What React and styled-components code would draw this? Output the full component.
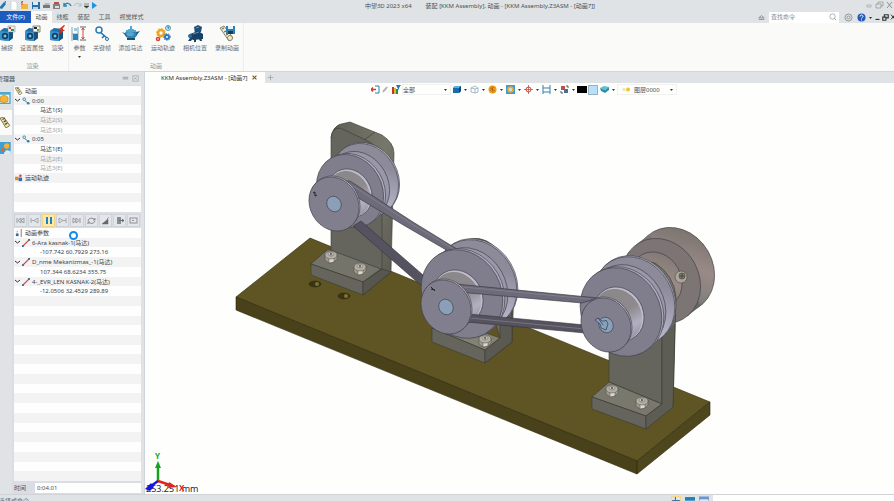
import React from 'react';
import styled, { createGlobalStyle } from 'styled-components';

const GlobalStyle = createGlobalStyle`
  * {
    box-sizing: border-box;
  }
  body {
    margin: 0;
    overflow: hidden;
    font-family: "Noto Sans", "Noto Sans CJK SC", sans-serif;
    font-size: 6px;
    line-height: 8px;
    color: #4c4f52;
  }
  button, input, select {
    margin: 0;
    padding: 0;
    border: 0;
    border-radius: 0;
    background: none;
    font: inherit;
    color: inherit;
  }
  svg {
    display: block;
    flex: none;
  }
`;

const Window = styled.div`
  display: flex;
  flex-direction: column;
  height: 100vh;
  background: #dfe3e5;
`;

const TitleBar = styled.header`
  display: flex;
  align-items: center;
  flex: 0 0 11px;
`;

const QuickAccess = styled.div`
  display: flex;
  align-items: center;
  gap: 1px;
`;

const IconButton = styled.button`
  display: flex;
  align-items: center;
  justify-content: center;
  flex: none;
  width: ${({ $w }) => $w || 10}px;
  height: 10px;
`;

const Title = styled.h1`
  display: flex;
  flex: 1;
  justify-content: center;
  gap: 14px;
  margin: 0;
  font-size: 6px;
  font-weight: 400;
  white-space: nowrap;
`;

const TabRow = styled.nav`
  display: flex;
  align-items: stretch;
  flex: 0 0 12px;
`;

const RibbonTab = styled.button`
  padding: 0 4px;
  white-space: nowrap;
  color: ${({ $file }) => ($file ? '#fff' : '#55595c')};
  background: ${({ $file, $active }) => {
    if ($file) return '#1d5cbe';
    return $active ? '#fafaf8' : 'transparent';
  }};
  width: ${({ $w }) => $w}px;
`;

const TabTools = styled.div`
  display: flex;
  align-items: center;
  margin-left: auto;
`;

const SearchBox = styled.label`
  display: flex;
  align-items: center;
  width: 70px;
  height: 11px;
  margin: 0 3px;
  padding: 0 2px;
  background: #fff;
  input {
    flex: 1;
    min-width: 0;
    outline: none;
  }
  input::placeholder {
    color: #85898c;
  }
`;

const Ribbon = styled.div`
  display: flex;
  flex: 0 0 49px;
  background: #fafaf8;
  border-bottom: 1px solid #d3d6d8;
`;

const RibbonGroup = styled.section`
  display: flex;
  flex-direction: column;
  justify-content: space-between;
  padding: 2px ${({ $end }) => $end || 0}px 0 0;
  border-right: 1px solid #eceeee;
`;

const GroupButtons = styled.div`
  display: flex;
`;

const GroupName = styled.span`
  text-align: center;
  color: #94979a;
  padding-bottom: 1px;
`;

const BigButton = styled.button`
  display: flex;
  flex-direction: column;
  align-items: center;
  justify-content: flex-start;
  gap: 2px;
  width: ${({ $w }) => $w}px;
  white-space: nowrap;
  line-height: 8px;
  color: #6a6d70;
`;

const Body = styled.main`
  display: flex;
  flex: 1;
  min-height: 0;
`;

const Side = styled.aside`
  display: flex;
  flex-direction: column;
  flex: 0 0 145px;
  border-right: 1px solid #d0d4dc;
`;

const SideHead = styled.div`
  display: flex;
  align-items: center;
  flex: 0 0 13px;
  padding: 0 4px 0 0;
  overflow: hidden;
`;

const SideTitle = styled.span`
  flex: 1;
  margin-left: -3px;
`;

const SideMain = styled.div`
  display: flex;
  flex: 1;
  min-height: 0;
`;

const SideTabs = styled.div`
  display: flex;
  flex-direction: column;
  flex: 0 0 12px;
`;

const SideTab = styled.button`
  display: flex;
  align-items: center;
  height: 25px;
  overflow: hidden;
  background: ${({ $active }) => ($active ? '#fafaf8' : 'transparent')};
`;

const SidePanel = styled.div`
  position: relative;
  display: flex;
  flex-direction: column;
  flex: 1;
  margin-right: 3px;
  padding: 1px 0 0 2px;
  background: #dadde5;
`;

const Rows = styled.ul`
  display: grid;
  grid-template-rows: repeat(${({ $count }) => $count}, 1fr);
  flex: ${({ $h }) => ($h ? `0 0 ${$h}px` : '1')};
  min-height: 0;
  margin: 0;
  padding: 0;
  list-style: none;
  background: #fefefe;
`;

const Row = styled.li`
  display: flex;
  align-items: center;
  gap: 2px;
  min-height: 0;
  padding-left: ${({ $indent }) => $indent || 1}px;
  white-space: nowrap;
  line-height: 8px;
  color: ${({ $dim }) => ($dim ? '#a6a6a6' : '#414446')};
  &:nth-child(even) {
    background: #f3f3f3;
  }
`;

const Player = styled.div`
  display: flex;
  align-items: center;
  flex: 0 0 16px;
`;

const PlayerButton = styled.button`
  display: flex;
  align-items: center;
  justify-content: center;
  flex: 1;
  height: 13px;
  margin-right: 1px;
  border: 1px solid ${({ $on }) => ($on ? '#ecd48a' : '#cfd2d8')};
  background: ${({ $on }) => ($on ? '#fbe9ae' : '#e4e6ea')};
`;

const Spinner = styled.div`
  position: absolute;
  left: 57px;
  top: 146px;
  width: 9px;
  height: 9px;
  border: 2px solid #128ce8;
  border-radius: 50%;
`;

const TimeRow = styled.label`
  display: flex;
  align-items: center;
  flex: 0 0 13px;
  input {
    flex: 1;
    min-width: 0;
    height: 10px;
    margin-left: 9px;
    padding-left: 2px;
    background: #fefefe;
  }
`;

const Work = styled.section`
  display: flex;
  flex-direction: column;
  flex: 1;
  min-width: 0;
`;

const DocTabs = styled.div`
  display: flex;
  align-items: center;
  flex: 0 0 11px;
`;

const DocTab = styled.button`
  display: flex;
  align-items: center;
  align-self: stretch;
  gap: 3px;
  padding: 0 7px 0 16px;
  background: #fefefc;
  color: #2c2e30;
`;

const Viewport = styled.div`
  position: relative;
  display: flex;
  flex-direction: column;
  flex: 1;
  min-height: 0;
  background: #fefefc;
`;

const ViewTools = styled.div`
  display: flex;
  align-items: center;
  justify-content: center;
  flex: 0 0 13px;
  padding-left: 8px;
`;

const Picker = styled.span`
  display: flex;
  align-items: center;
  width: ${({ $w }) => $w}px;
  height: 11px;
  padding-right: 2px;
  border: 1px solid #f0f0ee;
  select {
    flex: 1;
    min-width: 0;
    appearance: none;
    outline: none;
  }
`;

const Swatch = styled.button`
  width: 10px;
  height: ${({ $h }) => $h}px;
  margin-right: 1px;
  background: ${({ $color }) => $color};
  border: 1px solid ${({ $edge }) => $edge};
`;

const Scene = styled.svg`
  flex: 1;
  width: 100%;
  min-height: 0;
`;

const Measure = styled.span`
  position: absolute;
  left: 1px;
  bottom: 0;
  font-size: 9px;
  line-height: 10px;
  color: #2b2b2b;
`;

const StatusBar = styled.footer`
  display: flex;
  align-items: flex-start;
  flex: 0 0 7px;
  overflow: hidden;
  border-top: 1px solid #cfd3d5;
`;

const StatusText = styled.span`
  flex: 1;
  margin-left: -1px;
  padding-top: 2px;
  color: #6c7073;
`;

const StatusIcons = styled.div`
  display: flex;
  gap: 4px;
  padding: 1px 4px 0;
`;

const StatusField = styled.div`
  width: 181px;
  height: 7px;
  background: #fefefc;
`;

const Caret = () => (
  <svg width="5" height="5" viewBox="0 0 5 5"><path d="M1 2h3L2.500 4z" fill="#333" /></svg>
);

const SmallCaretButton = () => <IconButton $w={8} aria-label="更多"><Caret /></IconButton>;

/* ribbon drawings, 17 x 17 */
const CameraBody = ({ children }) => (
  <svg width="17" height="17" viewBox="0 0 17 17">
    <path d="M1 6l4-3 9 1v9l-4 3-9-1z" fill="#1f6fa8" />
    <path d="M1 6l9 1v9l-9-1z" fill="#3b93cc" />
    <path d="M10 7l4-3v9l-4 3z" fill="#14527f" />
    <circle cx="6" cy="11" r="3.200" fill="#0f3f63" />
    <circle cx="6" cy="11" r="1.500" fill="#7cc3ea" />
    {children}
  </svg>
);

const CaptureIcon = () => (
  <CameraBody>
    <path d="M9 1h7v6H9z" fill="#eef1ee" stroke="#777" strokeWidth="0.500" />
    <path d="M10 2h2v2h-2z" fill="#d43a2c" />
    <path d="M12 4h3v2h-3z" fill="#2f9a46" />
  </CameraBody>
);

const CaptureSetIcon = () => (
  <CameraBody>
    <path d="M9 1h7v6H9z" fill="#f5f5f5" stroke="#555" strokeWidth="0.700" />
    <path d="M10 2h3v2h-3z" fill="#222" />
    <path d="M13 4h2v2h-2z" fill="#5c9e3c" />
  </CameraBody>
);

const RenderIcon = () => (
  <CameraBody>
    <path d="M15 0l-6 5 3 .5L9 10l7-5-3-.5 3-4z" fill="#e0301f" />
  </CameraBody>
);

const ParamIcon = () => (
  <svg width="17" height="17" viewBox="0 0 17 17">
    <path d="M1 2v14M7 2v14M1 9h6" stroke="#8aa0b0" fill="none" />
    <path d="M2 9h5v6H2z" fill="#2a86b8" />
    <path d="M3 3h3v3H3z" fill="#9fcbe2" />
    <path d="M9 2h6M9 15h6" stroke="#567" />
    <path d="M12 3v11M10.500 5L12 3l1.500 2M10.500 12l1.500 2 1.500-2" stroke="#cf4a3a" fill="none" />
  </svg>
);

const KeyIcon = () => (
  <svg width="17" height="17" viewBox="0 0 17 17">
    <path d="M6 7l7 6M10 11l-2 2" stroke="#1f6fa5" strokeWidth="1.500" fill="none" />
    <circle cx="5" cy="5" r="3" fill="#fff" stroke="#2a7db4" strokeWidth="1.500" />
    <circle cx="13" cy="14" r="1.500" fill="#fff" stroke="#1f6fa5" />
  </svg>
);

const MotorIcon = () => (
  <svg width="18" height="17" viewBox="0 0 18 17">
    <ellipse cx="9" cy="9" rx="6" ry="5" fill="#2d86b5" />
    <path d="M0 7l5 2v3zM18 6l-4 1v4z" fill="#1d6590" />
    <path d="M5 13h8v2H5z" fill="#155070" />
    <path d="M4 5h10v2H4zM8 1h2v4H8z" fill="#4fa6cf" />
    <ellipse cx="8" cy="9" rx="4" ry="2" fill="#7fc4e2" opacity=".5" />
  </svg>
);

const TraceIcon = () => (
  <svg width="17" height="17" viewBox="0 0 17 17">
    <circle cx="6" cy="8" r="3" fill="none" stroke="#eca421" strokeWidth="2.500" />
    <circle cx="6" cy="8" r="4.500" fill="none" stroke="#eca421" strokeDasharray="1.500 2" />
    <circle cx="12" cy="12" r="2" fill="none" stroke="#2b78bf" strokeWidth="2" />
    <circle cx="12" cy="12" r="3.500" fill="none" stroke="#2b78bf" strokeDasharray="1 1.500" />
    <circle cx="3" cy="14" r="1.500" fill="none" stroke="#d8432f" strokeWidth="1.500" />
    <circle cx="13" cy="3" r="2.500" fill="#d5ebf2" stroke="#4d9cb4" />
    <path d="M12 2h2l-1 2" fill="none" stroke="#2e7d95" />
  </svg>
);

const CameraPosIcon = () => (
  <svg width="17" height="17" viewBox="0 0 17 17">
    <path d="M7 2l4-2 4 2-1 5-6 2z" fill="#1f4f78" />
    <path d="M3 9l8-3 5 3v5L6 15l-4-3z" fill="#164064" />
    <circle cx="3" cy="11" r="2" fill="#2c6b9c" />
    <path d="M3 13l-2 3h3l2-3zM11 12l2 4h2l-1-4zM7 13v4h2v-4z" fill="#18415f" />
    <path d="M9 3l3-1M6 9l6-2" stroke="#5b93bc" />
  </svg>
);

const RecordIcon = () => (
  <svg width="17" height="17" viewBox="0 0 17 17">
    <path d="M1 3l4-2 9 12-4 3z" fill="#f2ebcf" stroke="#8b8467" />
    <path d="M3 4l2-1M5 7l2-1M7 10l2-1" stroke="#57523c" />
    <path d="M7 1h9v8H7z" fill="#2f7fb3" />
    <path d="M9 1h5v3H9z" fill="#e8f2f7" />
    <path d="M9 6h5v3H9z" fill="#173e5b" />
    <circle cx="11" cy="13" r="2.500" fill="#f1ecd2" stroke="#8b8467" />
  </svg>
);

const renderTools = [
  { label: '捕捉', w: 14, Icon: CaptureIcon },
  { label: '设置属性', w: 36, Icon: CaptureSetIcon },
  { label: '渲染', w: 15, Icon: RenderIcon },
];

const motionTools = [
  { label: '参数', w: 21, Icon: ParamIcon, menu: true },
  { label: '关键帧', w: 24, Icon: KeyIcon },
  { label: '添加马达', w: 33, Icon: MotorIcon },
  { label: '运动轨迹', w: 32, Icon: TraceIcon },
  { label: '相机位置', w: 32, Icon: CameraPosIcon },
  { label: '录制动画', w: 32, Icon: RecordIcon },
];

const ToolGroup = ({ name, tools, end }) => (
  <RibbonGroup $end={end}>
    <GroupButtons>
      {tools.map(({ label, w, Icon, menu }) => (
        <BigButton key={label} $w={w}>
          <Icon />
          {label}
          {menu && <Caret />}
        </BigButton>
      ))}
    </GroupButtons>
    <GroupName>{name}</GroupName>
  </RibbonGroup>
);

/* 9 x 9 drawings for the narrow bars */
const Mini = ({ children, size = 9 }) => (
  <svg width={size} height={size} viewBox="0 0 9 9" fill="none">{children}</svg>
);

const quickIcons = [
  { name: '应用', w: 7, art: <path d="M0 7l5-6 2 2-4 5zM5 1l2-1v2z" fill="#1d79b5" /> },
  { name: '新建', w: 10, art: <path d="M2 0h4l2 2v7H2z" fill="#fff" stroke="#b5b9bc" strokeWidth="0.500" /> },
  { name: '打开', w: 10, art: <><path d="M1 3h7v5H1z" fill="#efb63c" /><path d="M2 0v4M1 2l2-2" stroke="#d9472e" /></> },
  { name: '保存', w: 10, art: <><path d="M1 1h8v7H1z" fill="#2b6fa3" /><path d="M2 1h5v3H2z" fill="#dcebf4" /><path d="M2 6h5v2H2z" fill="#bcd4e4" /></> },
  { name: '打印', w: 10, art: <><path d="M1 4h7v3H1z" fill="#74797c" /><path d="M3 2h5l-1 2H2z" fill="#b5b8ba" /></> },
  { name: '批量打印', w: 9, art: <><path d="M1 3h7v5H1z" fill="#85807c" /><path d="M2 1h5v2H2z" fill="#b5544a" /><path d="M3 5h4v2H3z" fill="#ddd" /></> },
  { name: '撤销', w: 10, art: <path d="M1 5c2-4 6-3 7 0M1 2v3h3" stroke="#2d86ad" strokeWidth="1.500" /> },
  { name: '重做', w: 9, art: <path d="M8 5c-2-4-6-3-7 0M8 2v3H5" stroke="#b4bcc0" /> },
  { name: '自定义', w: 7, art: <path d="M2 3h5M2 5h5L4.500 7z" stroke="#333" fill="#333" strokeWidth="0.500" /> },
  { name: '播放', w: 6, art: <path d="M2 1l5 3.500L2 8z" fill="#1f93e0" /> },
];

const FilmIcon = ({ size = 9 }) => (
  <Mini size={size}>
    <path d="M0 1l3-1 5 7-3 2z" fill="#f1e6b4" stroke="#6a6238" strokeWidth="0.700" />
    <path d="M2 2l2-1M3 4l2-1M4 6l2-1" stroke="#514b30" />
  </Mini>
);

const Twisty = () => (
  <svg width="5" height="5" viewBox="0 0 5 5" fill="none"><path d="M0 1l2.500 2L5 1" stroke="#333" /></svg>
);

const FrameIcon = () => (
  <Mini size={8}>
    <circle cx="2.500" cy="2.500" r="1.500" stroke="#3a7fae" />
    <path d="M3 4l4 3" stroke="#3a7fae" />
    <circle cx="7" cy="7" r="1.500" fill="#3a7fae" />
  </Mini>
);

const LinkIcon = () => (
  <Mini size={8}>
    <path d="M1 8l7-7" stroke="#d4473c" strokeWidth="1.500" />
    <path d="M0 7h2v2H0zM7 0h2v2H7z" fill="#2b6ca3" />
  </Mini>
);

const TraceSmall = () => (
  <Mini size={8}>
    <path d="M0 3h4v4H0z" fill="#e5872c" />
    <path d="M4 4h4v4H4z" fill="#2f6fb0" />
    <circle cx="6" cy="2" r="1.500" fill="#d2463a" />
  </Mini>
);

const ParamSmall = () => (
  <Mini size={8}>
    <path d="M1 5h3v3H1z" fill="#2a6ea6" />
    <path d="M7 0v9" stroke="#cc5246" />
    <path d="M2 2h1v2H2z" fill="#7a9" />
  </Mini>
);

const frames = [
  { text: '动画', icon: <FilmIcon size={8} /> },
  { text: '0:00', twisty: true, icon: <FrameIcon /> },
  { text: '马达1(S)', indent: 26 },
  { text: '马达2(S)', indent: 26, dim: true },
  { text: '马达3(S)', indent: 26, dim: true },
  { text: '0:05', twisty: true, icon: <FrameIcon /> },
  { text: '马达1(E)', indent: 26 },
  { text: '马达2(E)', indent: 26, dim: true },
  { text: '马达3(E)', indent: 26, dim: true },
  { text: '运动轨迹', icon: <TraceSmall /> },
];

const params = [
  { text: '动画参数', icon: <ParamSmall /> },
  { text: '6-Ara kasnak-1(马达)', twisty: true, icon: <LinkIcon /> },
  { text: '-107.742 60.7929 273.16', indent: 26 },
  { text: 'D_nme Mekanizmas_-1(马达)', twisty: true, icon: <LinkIcon /> },
  { text: '107.344 68.6234 355.75', indent: 26 },
  { text: '4-_EVR_LEN KASNAK-2(马达)', twisty: true, icon: <LinkIcon /> },
  { text: '-12.0506 32.4529 289.89', indent: 26 },
];

const RowList = ({ items, count, height }) => (
  <Rows $count={count} $h={height}>
    {Array.from({ length: count }, (_, i) => items[i] || {}).map((item, i) => (
      <Row key={i} $indent={item.indent} $dim={item.dim}>
        {item.twisty && <Twisty />}
        {item.icon}
        {item.text}
      </Row>
    ))}
  </Rows>
);

const playerButtons = [
  { name: '起点', art: <path d="M1 2v5M8 2L5 4.500 8 7zM5 2L2 4.500 5 7z" stroke="#96999d" /> },
  { name: '上一帧', art: <path d="M1 2v5M8 2L4 4.500 8 7zM1 4.500h3" stroke="#a3a6aa" /> },
  { name: '暂停', on: true, art: <path d="M2 1h2v7H2zM6 1h2v7H6z" fill="#1c82c0" /> },
  { name: '下一帧', art: <path d="M8 2v5M1 2l4 2.500L1 7zM5 4.500h3" stroke="#a3a6aa" /> },
  { name: '终点', art: <path d="M8 2v5M1 2l3 2.500L1 7zM4 2l3 2.500L4 7z" stroke="#96999d" /> },
  { name: '循环', art: <path d="M1 5c0-3 5-4 7-1M8 2v2H6M8 5c-1 3-5 3-7 1M1 8V6h2" stroke="#85888c" /> },
  { name: '速度', art: <path d="M1 8h6V3zM6 3l2-2" fill="#666a6e" stroke="#666a6e" strokeWidth="0.500" /> },
  { name: '导出', art: <><path d="M2 1h4v7H2z" fill="#8b8e91" /><path d="M4 4.500h5M7 3l2 1.500L7 6" stroke="#6c6f72" /></> },
  { name: '设置', art: <><rect x="1" y="2" width="7" height="5" stroke="#8e9194" /><path d="M3 4.500h2" stroke="#8e9194" /></> },
];

const viewIcons = [
  { name: '着色', art: <><path d="M1 3l2-2h6v5L7 8H1z" fill="#1b6da8" /><path d="M1 3l2-2h6L7 3z" fill="#58b2e0" /><path d="M7 3l2-2v5L7 8z" fill="#0e4470" /></> },
  { name: '线框', art: <path d="M1 3l4-2 3 2v4L5 8 1 7zM1 3l4 1 3-1M5 4v4" stroke="#82a1b4" strokeWidth="0.700" /> },
  { name: '视图', art: <><circle cx="4.500" cy="4.500" r="4" fill="#eca11c" /><path d="M2 3l5 3M2 6l4-4M4 1l1 7" stroke="#b4590f" strokeWidth="0.700" /></> },
  { name: '缩放', art: <><path d="M0 0h9v9H0z" fill="#3f9ccd" /><circle cx="4.500" cy="4.500" r="2.500" fill="#bfe1f2" stroke="#f0a92b" strokeWidth="1.500" /></> },
  { name: '定位', art: <><circle cx="4.500" cy="4.500" r="2.500" stroke="#cf4640" /><path d="M4.500 0v9M0 4.500h9" stroke="#9b4c4a" strokeWidth="0.700" /></> },
  { name: '截面', art: <path d="M1 0v9M8 0v9M1 3h7M1 7h7" stroke="#3581ad" /> },
  { name: '外观', art: <><path d="M1 1h4v4H1z" fill="#b6524c" /><path d="M4 4h4v4H4z" fill="#4b6f8e" /><path d="M6 1h2v2M1 6v2h2" stroke="#555" /></> },
];

/* the assembly: all discs share one tilt, axes run up and to the right */
const TILT = 60;

const rimPoint = (cx, cy, a, b, t) => {
  const r = (TILT * Math.PI) / 180;
  const x = a * Math.cos(t);
  const y = b * Math.sin(t);
  return [cx + x * Math.cos(r) - y * Math.sin(r), cy + x * Math.sin(r) + y * Math.cos(r)];
};

const Disc = ({ x, y, a, b, fill, stroke = '#3e3e48' }) => (
  <ellipse cx={x} cy={y} rx={a} ry={b} transform={`rotate(${TILT} ${x} ${y})`} fill={fill} stroke={stroke} strokeWidth="0.600" />
);

const Cylinder = ({ x, y, dx, dy, a, b, face, side }) => {
  const r = (-TILT * Math.PI) / 180;
  const u = dx * Math.cos(r) - dy * Math.sin(r);
  const v = dx * Math.sin(r) + dy * Math.cos(r);
  const t = Math.atan2(-b * u, a * v);
  const points = [
    rimPoint(x, y, a, b, t),
    rimPoint(x + dx, y + dy, a, b, t),
    rimPoint(x + dx, y + dy, a, b, t + Math.PI),
    rimPoint(x, y, a, b, t + Math.PI),
  ];
  return (
    <g>
      <Disc x={x + dx} y={y + dy} a={a} b={b} fill={side} />
      <polygon points={points.map((p) => p.join()).join(' ')} fill={side} />
      <Disc x={x} y={y} a={a} b={b} fill={face} />
    </g>
  );
};

const BackPulley = ({ x, y, a, b }) => (
  <g>
    <Cylinder x={x - 1} y={y + 1} dx={1} dy={-1} a={a} b={b} face="url(#groove)" side="#c0bfcd" />
    <Disc x={x - 7} y={y + 6} a={a - 3} b={b - 3} fill="#9a98a8" />
  </g>
);

const MidPulley = ({ x, y, a, b, hub }) => (
  <g>
    <Cylinder x={x} y={y} dx={2} dy={-1} a={a} b={b} face="#807d8c" side="#b1afc0" />
    <Disc x={x + hub[0]} y={y + hub[1]} a={hub[2]} b={hub[2] - 4} fill="#bfbdcb" />
    <Disc x={x + hub[0] - 1} y={y + hub[1] + 1} a={hub[2] - 1} b={hub[2] - 5} fill="url(#hub)" stroke="none" />
  </g>
);

const FrontPulley = ({ x, y, children }) => (
  <g>
    <Cylinder x={x} y={y} dx={1} dy={-1} a={28} b={24} face="#817e8d" side="#bcbaca" />
    <Disc x={x} y={y} a={8} b={7} fill="#8ba0b8" />
    {children}
  </g>
);

const Bolt = ({ x, y }) => (
  <g stroke="#4b4b45" strokeWidth="0.500">
    <path d={`M${x - 6} ${y - 1}v5l4 3 5-1 3-3v-5z`} fill="#a29b90" />
    <path d={`M${x - 2} ${y + 2}v5l5-1v-4z`} fill="#ddd9cf" />
    <ellipse cx={x} cy={y - 1} rx="6" ry="4" fill="#b5b0a6" />
    <ellipse cx={x} cy={y - 2} rx="3" ry="2" fill="#d8d4ca" />
    <ellipse cx={x} cy={y - 2} rx="1" ry="1" fill="#6a665e" />
  </g>
);

const Hole = ({ x, y }) => (
  <g>
    <ellipse cx={x} cy={y} rx="6" ry="3" fill="#3b3414" stroke="#2b260c" strokeWidth="0.500" />
    <ellipse cx={x + 2} cy={y} rx="2" ry="2" fill="#7d7136" />
  </g>
);

const Assembly = () => (
  <g strokeLinejoin="round">
    <defs>
      <linearGradient id="groove" x1="0" y1="0" x2="1" y2="1">
        <stop offset="0.300" stopColor="#8d8b9a" />
        <stop offset="0.700" stopColor="#b6b5c8" />
        <stop offset="1" stopColor="#9694a4" />
      </linearGradient>
      <linearGradient id="hub" x1="0" y1="0" x2="1" y2="0">
        <stop offset="0" stopColor="#8b8889" />
        <stop offset="0.500" stopColor="#8d898e" />
        <stop offset="0.800" stopColor="#b2b0c0" />
        <stop offset="1" stopColor="#9997a7" />
      </linearGradient>
      <linearGradient id="wheel" gradientUnits="userSpaceOnUse" x1="640" y1="240" x2="705" y2="310">
        <stop offset="0" stopColor="#77726c" />
        <stop offset="0.400" stopColor="#9a8a87" />
        <stop offset="0.650" stopColor="#87827f" />
        <stop offset="1" stopColor="#56605d" />
      </linearGradient>
      <linearGradient id="bend" x1="0" y1="0" x2="1" y2="1">
        <stop offset="0" stopColor="#5f5f56" />
        <stop offset="0.500" stopColor="#77776b" />
        <stop offset="1" stopColor="#55554d" />
      </linearGradient>
    </defs>

    {/* base plate */}
    <g stroke="#2b260c" strokeWidth="0.600">
      <path d="M236 297l74-59 400 164-73 59z" fill="#5f5524" />
      <path d="M236 297l401 164v13L236 310z" fill="#49411a" />
      <path d="M637 461l73-59v13l-73 59z" fill="#4e461c" />
    </g>
    <Hole x={315} y={284} />
    <Hole x={344} y={296} />

    {/* left stand */}
    <g stroke="#393933" strokeWidth="0.600">
      <path d="M331 138Q332 127 341 124L350 122L382 135Q394 143 394 153L391 272L363 295V282L380 269V158z" fill="url(#bend)" />
      <path d="M331 255V138Q332 128 340 128L366 140Q381 147 382 162V270z" fill="#65655d" />
      <path d="M340 124l-6 5M375 132l-11 8" fill="none" />
      <path d="M311 264l17-15 53 20-18 13z" fill="#74746a" />
      <path d="M311 264l52 18v13l-52-20z" fill="#65655d" />
      <path d="M363 282l19-13 9 3-28 23z" fill="#575750" />
    </g>
    <Bolt x={331} y={256} />
    <Bolt x={360} y={268} />

    {/* middle stand */}
    <g stroke="#393933" strokeWidth="0.600">
      <path d="M470 239Q488 235 503 256Q514 270 514 290L512 342L485 363V350L500 338z" fill="url(#bend)" />
      <path d="M432 328l12-10 56 20-15 12z" fill="#818174" />
      <path d="M432 328l53 22v13l-53-21z" fill="#65655d" />
      <path d="M485 350l15-12V310l12-8v40l-27 21z" fill="#5a5a53" />
    </g>
    <Bolt x={485} y={340} />

    {/* flywheel and right stand */}
    <Cylinder x={661} y={281} dx={14} dy={-11} a={44} b={38} face="#7d7573" side="url(#wheel)" />
    <Cylinder x={645} y={289} dx={11} dy={-9} a={29} b={25} face="#736e68" side="url(#wheel)" />
    <g stroke="#393933" strokeWidth="0.600">
      <path d="M630 258L655 263Q674 275 676 297L673 407L662 404V330z" fill="url(#bend)" />
      <path d="M609 382V335h53v69z" fill="#65655d" />
      <path d="M592 397l17-15 53 22-16 12z" fill="#78786d" />
      <path d="M592 397l54 19v13l-54-20z" fill="#65655d" />
      <path d="M662 404v-70l13-10-2 83-11 9z" fill="#5d5d56" stroke="none" />
      <path d="M662 334v70l-16 12v13l27-22 2-83" fill="#5d5d56" />
    </g>
    <Bolt x={612} y={390} />
    <Bolt x={642} y={402} />
    <circle cx="681" cy="277" r="6" fill="#aaa69c" stroke="#4b4b45" strokeWidth="0.600" />
    <circle cx="682" cy="276" r="3" fill="#81796f" stroke="#3b3b35" strokeWidth="0.600" />
    <path d="M680 276h4M682 274v4" stroke="#333" strokeWidth="0.700" />

    <BackPulley x={366} y={179} a={38} b={32} />
    <BackPulley x={477} y={283} a={46} b={39} />
    <BackPulley x={635} y={300} a={46} b={39} />
    <MidPulley x={350} y={191} a={38} b={32} hub={[0, 2, 25]} />

    {/* long belt */}
    <g stroke="#33323c" strokeWidth="0.600">
      <path d="M344 181l6 0 63 41 57 35-22-6-43-25-50-30z" fill="#6d6a79" />
      <path d="M350 184l60 39 50 30" stroke="#8d8b9a" fill="none" />
      <path d="M353 226l8-5 62 54v12z" fill="#55535f" />
    </g>

    <MidPulley x={462} y={294} a={46} b={39} hub={[-4, 3, 28]} />
    <MidPulley x={621} y={312} a={46} b={39} hub={[-2, 2, 28]} />

    {/* short belt */}
    <g stroke="#33323c" strokeWidth="0.600">
      <path d="M446 283l152 15-16 5-124-11z" fill="#6d6a79" />
      <path d="M452 286l138 13" stroke="#8d8b9a" fill="none" />
      <path d="M469 314l116 11v8l-118-11z" fill="#56535f" />
      <path d="M469 318l116 11" stroke="#8d8b9a" fill="none" />
    </g>

    <FrontPulley x={334} y={204}>
      <path d="M313 193l2-1v4l2-1" stroke="#222" fill="none" strokeWidth="1" />
    </FrontPulley>
    <FrontPulley x={446} y={307}>
      <path d="M431 287l4 4M431 289l4 1" stroke="#222" strokeWidth="1" />
    </FrontPulley>
    <FrontPulley x={606} y={325}>
      <path d="M595 320l3-2 4 3h3l1-1 2 4-2 6-5-2-1-4z" fill="#86a0bd" stroke="#2e3c4e" strokeWidth="0.700" />
      <path d="M598 318l5 7" stroke="#2e3c4e" strokeWidth="0.700" />
    </FrontPulley>
  </g>
);

const Triad = styled.svg`
  position: absolute;
  left: 0;
  bottom: 0;
  z-index: 1;
  font-family: "Noto Sans", sans-serif;
  font-size: 8px;
  font-weight: 700;
`;

const AxisTriad = () => (
  <Triad width="56" height="48" viewBox="145 446 56 48">
    <path d="M158 481V466" stroke="#15a31c" strokeWidth="2.500" />
    <path d="M155 468l3-7 3 7z" fill="#15a31c" />
    <path d="M158 481l12 4" stroke="#e2231a" strokeWidth="2.500" />
    <path d="M169 482l8 5-9 1z" fill="#e2231a" />
    <path d="M158 481l-7 5" stroke="#1616dc" strokeWidth="2.500" />
    <path d="M154 487l-3-4-6 6 5 2z" fill="#1616dc" />
    <text x="155" y="459" fill="#15a31c">Y</text>
    <text x="179" y="491" fill="#e2231a">X</text>
  </Triad>
);

const App = () => (
  <Window>
    <GlobalStyle />
    <TitleBar>
      <QuickAccess>
        {quickIcons.map(({ name, w, art }) => (
          <IconButton key={name} $w={w} aria-label={name}><Mini>{art}</Mini></IconButton>
        ))}
      </QuickAccess>
      <Title>
        <span>中望3D 2023 x64</span>
        <span>装配 [KKM Assembly],  动画 - [KKM Assembly.Z3ASM - [动画7]]</span>
      </Title>
      <IconButton aria-label="最小化"><Mini><rect x="3" y="4" width="4" height="2" stroke="#8d9194" strokeWidth="0.500" /></Mini></IconButton>
      <IconButton $w={12} aria-label="还原"><Mini><path d="M1 3h5v4H1zM3 3V1h5v4H6" stroke="#8d9194" strokeWidth="0.700" /></Mini></IconButton>
      <IconButton $w={9} aria-label="关闭"><Mini><path d="M2 1l5 6M7 1L2 7" stroke="#8d9194" /></Mini></IconButton>
    </TitleBar>

    <TabRow>
      <RibbonTab $file $w={31}>文件(F)</RibbonTab>
      <RibbonTab $active $w={21}>动画</RibbonTab>
      <RibbonTab $w={21}>线框</RibbonTab>
      <RibbonTab $w={21}>装配</RibbonTab>
      <RibbonTab $w={21}>工具</RibbonTab>
      <RibbonTab $w={33}>视觉样式</RibbonTab>
      <TabTools>
        <IconButton aria-label="折叠功能区"><Mini size={7}><path d="M1 5l3.500-3L8 5zM1 7h7" stroke="#7b7f82" /></Mini></IconButton>
        <SearchBox>
          <input placeholder="查找命令" aria-label="查找命令" />
          <Mini size={8}><circle cx="4" cy="4" r="3" stroke="#888" strokeWidth="0.700" /><path d="M6 6l2 2" stroke="#888" /></Mini>
        </SearchBox>
        <IconButton $w={13} aria-label="设置"><Mini><circle cx="4.500" cy="4.500" r="3.500" stroke="#96999b" /><circle cx="4.500" cy="4.500" r="1.500" stroke="#96999c" /></Mini></IconButton>
        <IconButton $w={12} aria-label="帮助">
          <Mini><circle cx="4.500" cy="4.500" r="4" fill="#2458b8" /><path d="M3 3.500c0-2 3-2 3 0 0 1-1.500 1-1.500 2M4.500 6.500v1" stroke="#fff" /></Mini>
        </IconButton>
        <IconButton $w={6} aria-label="帮助菜单"><Caret /></IconButton>
        <IconButton $w={8} aria-label="最小化文档"><Mini size={7}><path d="M2 7h5" stroke="#333" strokeWidth="1.500" /></Mini></IconButton>
        <IconButton $w={9} aria-label="还原文档"><Mini size={7}><path d="M1 4h4v4H1zM3 4V1h5v4H5" stroke="#333" strokeWidth="1.500" /></Mini></IconButton>
        <IconButton $w={4} aria-label="关闭文档"><Mini size={6}><path d="M3 1l6 7M9 1L3 8" stroke="#333" strokeWidth="1.500" /></Mini></IconButton>
      </TabTools>
    </TabRow>

    <Ribbon>
      <ToolGroup name="渲染" tools={renderTools} end={3} />
      <ToolGroup name="动画" tools={motionTools} />
    </Ribbon>

    <Body>
      <Side>
        <SideHead>
          <SideTitle>管理器</SideTitle>
          <IconButton aria-label="停靠"><Mini size={7}><path d="M1 3h7M1 5h7" stroke="#8d9194" /></Mini></IconButton>
          <IconButton aria-label="关闭面板"><Mini size={7}><path d="M1 1h7v7H1zM3 3l3 3M6 3L3 6" stroke="#8d9194" strokeWidth="0.700" /></Mini></IconButton>
        </SideHead>
        <SideMain>
          <SideTabs>
            <SideTab aria-label="装配管理">
              <Mini size={12}><path d="M0 0h8v9H0z" fill="#4aa8d5" /><path d="M0 2h7v6H0z" fill="#eaf4f8" /><path d="M0 4l3-2 3 2v3L3 8 0 7z" fill="#f2b632" stroke="#c98712" strokeWidth="0.500" /></Mini>
            </SideTab>
            <SideTab $active aria-label="动画管理"><FilmIcon size={11} /></SideTab>
            <SideTab aria-label="视觉管理">
              <Mini size={12}><path d="M0 0h8v9H0z" fill="#3ba0d6" /><circle cx="5" cy="3" r="2" fill="#f3b13a" /><circle cx="2" cy="6" r="1.500" fill="#d9693a" /><path d="M3 8l2-2 3 1v2H3z" fill="#d9eef8" /></Mini>
            </SideTab>
          </SideTabs>
          <SidePanel>
            <RowList items={frames} count={13} height={126} />
            <Player>
              {playerButtons.map(({ name, on, art }) => (
                <PlayerButton key={name} $on={on} aria-label={name}><Mini>{art}</Mini></PlayerButton>
              ))}
            </Player>
            <RowList items={params} count={26} />
            <TimeRow>
              时间
              <input defaultValue="0:04.01" />
            </TimeRow>
            <Spinner />
          </SidePanel>
        </SideMain>
      </Side>

      <Work>
        <DocTabs>
          <DocTab>
            KKM Assembly.Z3ASM - [动画7]
            <Mini size={7}><path d="M2 2l5 5M7 2L2 7" stroke="#7a5a20" strokeWidth="1.500" /></Mini>
          </DocTab>
          <IconButton $w={12} aria-label="新建文档"><Mini size={7}><path d="M4.500 1v7M1 4.500h7" stroke="#9da1a4" /></Mini></IconButton>
        </DocTabs>
        <Viewport>
          <ViewTools>
            <IconButton aria-label="退出"><Mini><path d="M4 1h4v7H4" stroke="#3779a5" /><path d="M0 4.500h5M2 2.500l-2 2 2 2" stroke="#cf3d35" strokeWidth="1.500" /></Mini></IconButton>
            <IconButton aria-label="刷子"><Mini size={7}><path d="M1 8l1-3 4-4 1 1-3 4z" fill="#b4b4b2" stroke="#8d8d8b" strokeWidth="0.500" /></Mini></IconButton>
            <IconButton $w={12} aria-label="过滤器">
              <Mini><path d="M0 2h2v7H0z" fill="#c6362c" /><path d="M2 3h2v6H2z" fill="#e3b72b" /><path d="M4 4h2v5H4z" fill="#2c8b45" /><path d="M4 0h5L7 3v2L6 4z" fill="#247bb8" /></Mini>
            </IconButton>
            <Picker $w={49}>
              <select aria-label="选择过滤"><option>全部</option></select>
              <Caret />
            </Picker>
            {viewIcons.map(({ name, art }) => (
              <React.Fragment key={name}>
                <IconButton aria-label={name}><Mini>{art}</Mini></IconButton>
                <SmallCaretButton />
              </React.Fragment>
            ))}
            <Swatch $color="#000" $edge="#000" $h={7} aria-label="线颜色" />
            <Swatch $color="#b9e0f8" $edge="#9ab2c0" $h={10} aria-label="面颜色" />
            <IconButton aria-label="图层"><Mini><path d="M0 3l4-2 5 1-4 3z" fill="#58c2cf" /><path d="M0 3l5 2v3L1 6zM5 5l4-3v3L5 8z" fill="#2f8fa8" /></Mini></IconButton>
            <SmallCaretButton />
            <Picker $w={60}>
              <IconButton $w={16} aria-label="图层可见"><Mini><circle cx="2" cy="4.500" r="1.500" fill="#efe4a0" /><circle cx="6" cy="4.500" r="2" fill="#e9c92f" /></Mini></IconButton>
              <select aria-label="当前图层"><option>图层0000</option></select>
              <Caret />
            </Picker>
          </ViewTools>
          <Scene viewBox="145 96 749 398" role="img" aria-label="KKM Assembly"><Assembly /></Scene>
          <AxisTriad />
          <Measure>253.251 mm</Measure>
        </Viewport>
      </Work>
    </Body>

    <StatusBar>
      <StatusText>选择或命令</StatusText>
      <StatusIcons>
        <Mini size={10}><path d="M0 0h9v9H0z" fill="#f5d98a" /><path d="M1 1h7v7H1z" fill="#dfe8f0" /><path d="M1 4h7M4 1v7" stroke="#4c6e96" /></Mini>
        <Mini size={10}><path d="M0 1h9v8H0z" fill="#6fc6e4" /><path d="M0 1h9v3H0z" fill="#2480b8" /></Mini>
        <Mini size={10}><path d="M0 1h9v8H0z" fill="#dfe9f8" stroke="#6d94d1" /><path d="M0 1h9v2H0z" fill="#6d94d1" /></Mini>
      </StatusIcons>
      <StatusField />
    </StatusBar>
  </Window>
);

export default App;
